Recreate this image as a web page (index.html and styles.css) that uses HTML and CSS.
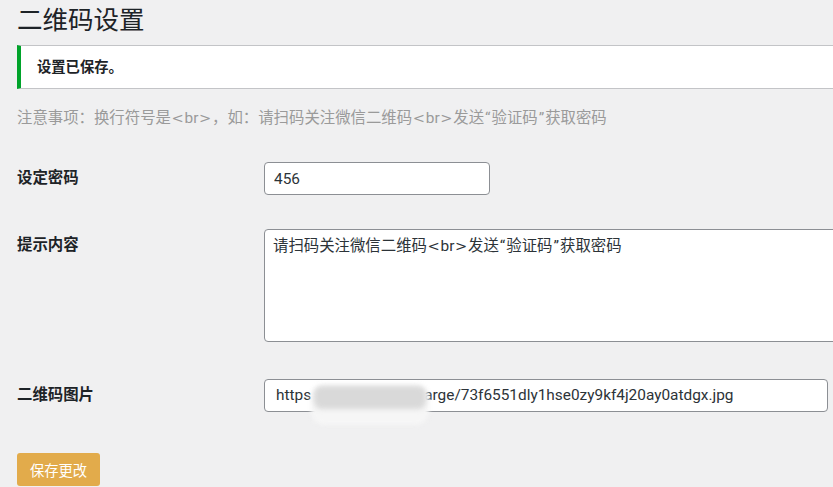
FILE: index.html
```html
<!DOCTYPE html>
<html lang="zh-CN">
<head>
<meta charset="utf-8">
<title>二维码设置</title>
<link rel="stylesheet" href="styles.css">
</head>
<body>
<div class="wrap">
  <h1 class="title">二维码设置</h1>
  <div class="notice"><p>设置已保存。</p></div>
  <p class="note">注意事项：换行符号是<span class="sym">&lt;</span>br<span class="sym">&gt;</span>，如：请扫码关注微信二维码<span class="sym">&lt;</span>br<span class="sym">&gt;</span>发送<span class="q">“</span>验证码<span class="q">”</span>获取密码</p>
  <form class="form">
    <div class="row">
      <label class="label">设定密码</label>
      <input class="field field-short" type="text" value="456">
    </div>
    <div class="row row-area">
      <label class="label">提示内容</label>
      <div class="field area">请扫码关注微信二维码<span class="sym">&lt;</span>br<span class="sym">&gt;</span>发送<span class="q">“</span>验证码<span class="q">”</span>获取密码</div>
    </div>
    <div class="row row-url">
      <label class="label">二维码图片</label>
      <div class="url-wrap">
        <div class="field field-url">https<span class="hidden-part"></span>arge/73f6551dly1hse0zy9kf4j20ay0atdgx.jpg</div>
        <div class="blur blur-outer"></div>
        <div class="blur blur-inner"></div>
      </div>
    </div>
    <button type="button" class="button">保存更改</button>
  </form>
</div>
</body>
</html>
```

FILE: styles.css
```css
html, body {
  margin: 0;
  padding: 0;
  overflow: hidden;
}
body {
  background: #f0f0f1;
  color: #1d2327;
  font-family: "Segoe UI", Roboto, "Noto Sans CJK SC", sans-serif;
  width: 833px;
  height: 487px;
}
.wrap {
  padding-left: 17px;
  width: 900px;
}
.title {
  margin: 4px 0 0;
  font-size: 25.5px;
  font-weight: 400;
  line-height: 33px;
  color: #1d2327;
}
.notice {
  margin-top: 8px;
  background: #fff;
  border: 1px solid #c3c4c7;
  border-left: 4px solid #00a32a;
  height: 42px;
  padding: 0 16px;
}
.notice p {
  margin: 0;
  font-size: 14.3px;
  font-weight: 600;
  line-height: 42px;
}
.note {
  margin: 18px 0 0;
  font-size: 15.4px;
  line-height: 22px;
  color: #9a9a9a;
}
.sym {
  font-family: "DejaVu Sans", sans-serif;
  font-size: 0.95em;
  margin: 0 0.7px;
}
.q {
  margin: 0 1px;
}
.form {
  margin-top: 33px;
}
.row {
  display: flex;
  align-items: flex-start;
}
.row-area {
  margin-top: 34px;
}
.row-url {
  margin-top: 37px;
}
.label {
  width: 247px;
  flex: none;
  font-size: 15.4px;
  font-weight: 600;
  line-height: 33px;
}
.field {
  box-sizing: border-box;
  margin: 0;
  border: 1px solid #8c8f94;
  border-radius: 4px;
  background: #fff;
  color: #2c3338;
  font-family: "Segoe UI", Roboto, "Noto Sans CJK SC", sans-serif;
  font-size: 15.4px;
  padding: 0 9px;
  height: 33px;
  line-height: 31px;
}
.field-short {
  width: 226px;
}
.area {
  width: 620px;
  height: 113px;
  padding: 4px 8px;
  line-height: 24px;
}
.url-wrap {
  position: relative;
}
.field-url {
  width: 564px;
  white-space: nowrap;
  overflow: hidden;
  padding-left: 11px;
}
.hidden-part {
  display: inline-block;
  width: 113px;
}
.blur {
  position: absolute;
  pointer-events: none;
}
.blur-outer {
  left: 47px;
  top: 6px;
  width: 118px;
  height: 40px;
  background: #f6f6f6;
  border-radius: 14px;
  filter: blur(2px);
}
.blur-inner {
  left: 50px;
  top: 7px;
  width: 112px;
  height: 23px;
  background: #d9d9d9;
  border-radius: 8px;
  filter: blur(2.5px);
}
.button {
  margin-top: 41px;
  width: 83px;
  height: 33px;
  border: 0;
  border-radius: 3px;
  background: #e2ab4b;
  color: #fff;
  font-family: "Segoe UI", Roboto, "Noto Sans CJK SC", sans-serif;
  font-size: 14.3px;
  padding: 0;
}
```
